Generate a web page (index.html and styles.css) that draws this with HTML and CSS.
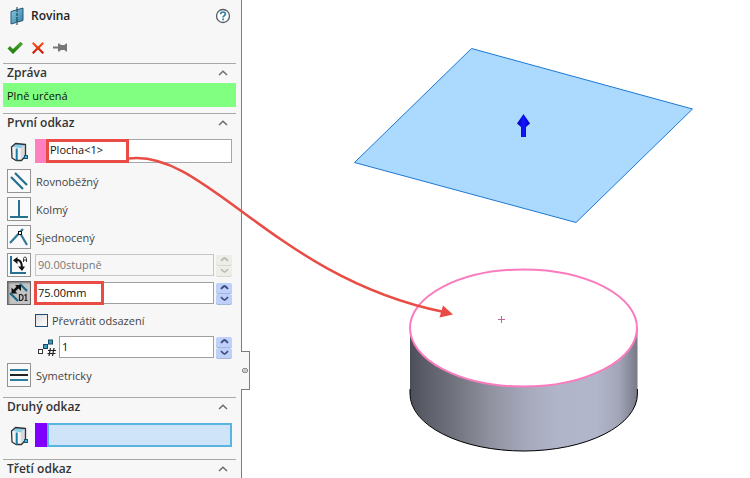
FILE: index.html
```html
<!DOCTYPE html>
<html lang="cs">
<head>
<meta charset="utf-8">
<title>Rovina</title>
<link rel="stylesheet" href="styles.css">
</head>
<body>
<svg class="defs" aria-hidden="true">
  <defs>
    <linearGradient id="blue" x1="0" y1="0" x2="1" y2="1"><stop offset="0" stop-color="#8fc8e0"/><stop offset="1" stop-color="#2f7fa5"/></linearGradient>
    <linearGradient id="green" x1="0" y1="0" x2="0" y2="1"><stop offset="0" stop-color="#4aa82c"/><stop offset="1" stop-color="#1d7c0d"/></linearGradient>
    <linearGradient id="red" x1="0" y1="0" x2="0" y2="1"><stop offset="0" stop-color="#ff5a1e"/><stop offset="1" stop-color="#c51208"/></linearGradient>
    <symbol id="chevron" viewBox="0 0 10 6"><path d="M1 5 5 1.200 9 5" fill="none" stroke="#6c6c6c" stroke-width="1.500"/></symbol>
    <symbol id="spin-up" viewBox="0 0 9 5"><path d="M1 4Q3.800 1 4.500 1T8 4" fill="none" stroke="currentColor" stroke-width="1.800"/></symbol>
    <symbol id="spin-down" viewBox="0 0 9 5"><path d="M1 1Q3.800 4 4.500 4T8 1" fill="none" stroke="currentColor" stroke-width="1.800"/></symbol>
    <symbol id="cube" viewBox="0 0 20 20">
      <path d="M1.500 5 5.500 1.500l10 1L11 6.500z" fill="#8bd0e8"/>
      <path d="m10.500 6.500 5-4V14l-5 4.500z" fill="#dadada"/>
      <path d="m1.500 5 9 1.500v12l-8-2z" fill="#f4f4f4"/>
      <path d="M1.500 5 5.500 1.500l10 1V14l-4 4.500H6l-4-2.500z" fill="none" stroke="#333" stroke-width="1.300" stroke-linejoin="round"/>
      <path d="M6.700 6.500v12" stroke="#187ba8" stroke-width="2"/>
      <rect x="14.500" y="13.500" width="3" height="3" fill="#4cb2d7" stroke="#135a7d"/>
    </symbol>
  </defs>
</svg>

<div class="app">
  <aside class="panel">
    <header class="title">
      <svg class="title-icon" viewBox="0 0 14 18" aria-hidden="true">
        <path d="M1 4.500 13 1v12.500L1 17z" fill="url(#blue)" stroke="#245b78"/>
        <path d="M7 0v18" stroke="#173443" stroke-dasharray="5 1 3 1"/>
      </svg>
      <h1>Rovina</h1>
      <button class="help" type="button" aria-label="Nápověda">
        <svg viewBox="0 0 16 16"><circle cx="8" cy="8" r="6.500" fill="#fff" stroke="#555b60" stroke-width="1.300"/><path d="M5.700 6.200C5.700 3.300 10.400 3.300 10.400 6c0 1.700-2.300 1.700-2.300 3.600M8.100 10.500v1.700" fill="none" stroke="#2b7fa8" stroke-width="1.700"/></svg>
      </button>
    </header>
    <div class="actions">
      <button type="button" aria-label="OK"><svg viewBox="0 0 16 14"><path d="M.500 7.500 3 5l3 3L13.500.700 16 3 6 13z" fill="url(#green)"/></svg></button>
      <button type="button" aria-label="Storno"><svg viewBox="0 0 16 14"><path d="m3.500 1 4.500 4.500L12.500 1 14 2.500 9.700 7l4.300 4.500-1.500 1.500L8 8.500 3.500 13 2 11.500 6.300 7 2 2.500z" fill="url(#red)"/></svg></button>
      <button type="button" aria-label="Připnout"><svg viewBox="0 0 16 14"><path d="M0 5.500h5V2.500h1.300L8 4h3.500l1.500-1.500h1v8h-1L11.500 9H8l-1.700 1.500H5v-3H0z" fill="#777"/></svg></button>
    </div>

    <section class="section">
      <button class="section-head" type="button">Zpráva<svg><use href="#chevron"/></svg></button>
      <p class="message">Plně určená</p>
    </section>

    <section class="section">
      <button class="section-head" type="button">První odkaz<svg><use href="#chevron"/></svg></button>
      <div class="rows">
        <div class="row pick-row">
          <label class="pick-icon" for="ref1" aria-label="První odkaz"><svg viewBox="0 0 20 20"><use href="#cube"/></svg></label>
          <div class="pick pink"><input id="ref1" type="text" value="Plocha&lt;1&gt;" readonly></div>
        </div>
        <div class="row">
          <button class="tool" id="parallel" type="button"><svg viewBox="0 0 22 22"><path d="m3 7 12 12M7 3l12 12" stroke="#26718f" stroke-width="2.200"/></svg></button>
          <label for="parallel">Rovnoběžný</label>
        </div>
        <div class="row">
          <button class="tool" id="perp" type="button"><svg viewBox="0 0 22 22"><path d="M11 2v16M2 19h18" stroke="#26718f" stroke-width="2"/></svg></button>
          <label for="perp">Kolmý</label>
        </div>
        <div class="row">
          <button class="tool" id="coincident" type="button"><svg viewBox="0 0 22 22"><path d="M2 17 15 3M12 7l7 12" stroke="#2e7897" stroke-width="2.200"/><rect x="10.500" y="5.500" width="3" height="3" fill="#fff" stroke="#111"/></svg></button>
          <label for="coincident">Sjednocený</label>
        </div>
        <div class="row">
          <button class="tool" type="button" aria-label="Úhel"><svg viewBox="0 0 22 22"><path d="M3 2v17h15" fill="none" stroke="#26718f" stroke-width="2"/><path d="M7 6h3q4 1 4 8" fill="none" stroke="#111" stroke-width="2"/><path d="M5 6.200 9.500 3v7zM10 12.500h7L14 17z" fill="#111"/><path d="M15.500 8V4.500l1-1.500h1l1 1.500V8M15.500 6h3" fill="none" stroke="#333"/></svg></button>
          <input class="value" type="text" value="90.00stupně" aria-label="Úhel ve stupních" disabled>
          <span class="spin"><button type="button" aria-label="Zvětšit úhel" disabled><svg><use href="#spin-up"/></svg></button><button type="button" aria-label="Zmenšit úhel" disabled><svg><use href="#spin-down"/></svg></button></span>
        </div>
        <div class="row">
          <button class="tool pressed" type="button" aria-label="Vzdálenost" aria-pressed="true"><svg viewBox="0 0 22 22"><path d="m2 11 8 8M12 2l7 7" stroke="#176889" stroke-width="2.200"/><path d="m5 10 6-6" stroke="#111" stroke-width="2.500"/><path d="M3.500 11.500V5.500l6 6zM7 3h6v6z" fill="#111"/><path d="M11.500 12.500v6h2l1.500-1.500v-3l-1.500-1.500zM16.500 13.500l1.500-1v6M16.500 18.500h3" fill="none" stroke="#222" stroke-width="1.200"/></svg></button>
          <input class="value" type="text" value="75.00mm" aria-label="Vzdálenost odsazení">
          <span class="spin"><button type="button" aria-label="Zvětšit vzdálenost"><svg><use href="#spin-up"/></svg></button><button type="button" aria-label="Zmenšit vzdálenost"><svg><use href="#spin-down"/></svg></button></span>
        </div>
        <div class="row check-row">
          <input class="check" type="checkbox" id="flip"><label for="flip">Převrátit odsazení</label>
        </div>
        <div class="row count-row">
          <label class="count-icon" for="count" aria-label="Počet rovin"><svg viewBox="0 0 20 18"><rect x="1.500" y="10.500" width="4" height="4" fill="#fff" stroke="#333"/><rect x="6.500" y="5.500" width="4" height="4" fill="#3d9bc1" stroke="#174a63"/><rect x="11.500" y="1" width="4" height="4" fill="#3d9bc1" stroke="#174a63"/><path d="m13.500 9-1.500 8M17 9l-1.500 8M11 11.500h8M10.500 14.500h8" stroke="#222" stroke-width="1.200"/></svg></label>
          <input class="value" id="count" type="text" value="1">
          <span class="spin"><button type="button" aria-label="Zvětšit počet"><svg><use href="#spin-up"/></svg></button><button type="button" aria-label="Zmenšit počet"><svg><use href="#spin-down"/></svg></button></span>
        </div>
        <div class="row">
          <button class="tool" id="mid" type="button"><svg viewBox="0 0 22 22"><path d="M2 6h18M2 16h18" stroke="#2f7c9e" stroke-width="2"/><path d="M2 11h18" stroke="#222" stroke-width="2"/></svg></button>
          <label for="mid">Symetricky</label>
        </div>
      </div>
    </section>

    <section class="section">
      <button class="section-head" type="button">Druhý odkaz<svg><use href="#chevron"/></svg></button>
      <div class="rows">
        <div class="row pick-row">
          <label class="pick-icon" for="ref2" aria-label="Druhý odkaz"><svg viewBox="0 0 20 20"><use href="#cube"/></svg></label>
          <div class="pick violet"><input id="ref2" type="text" readonly></div>
        </div>
      </div>
    </section>

    <section class="section">
      <button class="section-head" type="button">Třetí odkaz<svg><use href="#chevron"/></svg></button>
    </section>
    <button class="handle" type="button" aria-label="Skrýt panel"></button>
  </aside>

  <main class="viewport">
    <svg class="scene" viewBox="242 0 508 478" preserveAspectRatio="xMinYMin meet" role="img" aria-label="Válec a rovnoběžná rovina">
      <defs>
        <linearGradient id="side"><stop offset="0" stop-color="#4c4e59"/><stop offset=".06" stop-color="#5a5c68"/><stop offset=".2" stop-color="#72747f"/><stop offset=".35" stop-color="#8f919f"/><stop offset=".52" stop-color="#a7aabd"/><stop offset=".65" stop-color="#b1b5ca"/><stop offset=".82" stop-color="#b2b6cb"/><stop offset=".92" stop-color="#a2a5b7"/><stop offset="1" stop-color="#777986"/></linearGradient>
        <linearGradient id="tip"><stop offset="0" stop-color="#0000ae"/><stop offset=".5" stop-color="#1414ff"/><stop offset="1" stop-color="#0000c4"/></linearGradient>
      </defs>
      <path d="M471.500 48.500 692.500 109 576 222.500 354.500 162.500z" fill="#acdaff" stroke="#1c78d4"/>
      <path d="M523.500 114 530 123.500 526 127v10h-5v-10l-4-3.500z" fill="url(#tip)"/>
      <path d="M410 328v65.500a113.500 57.500 0 0 0 227.500 0V328z" fill="url(#side)"/>
      <path d="M410 389v5a113.700 57 0 0 0 227.400 0v-5" fill="none" stroke="#000"/>
      <ellipse cx="523.500" cy="328" rx="113.500" ry="58.500" fill="#fff" stroke="#fa7cbe" stroke-width="2"/>
      <path d="M498 319.500h7M501.500 316v7" stroke="#c4689c"/>
    </svg>
  </main>

  <svg class="callouts" viewBox="0 0 750 478" aria-hidden="true">
    <g fill="none" stroke="#e84c44" stroke-width="3">
      <rect x="47.500" y="140.500" width="80" height="21"/>
      <rect x="35.500" y="282.500" width="67" height="21"/>
      <path d="M129 158.500C205 149 276 278 444 312" stroke-width="2.500"/>
    </g>
    <path d="m443 305.500 10 9-13.500 3z" fill="#e84c44"/>
  </svg>
</div>
</body>
</html>
```

FILE: styles.css
```css
* { box-sizing: border-box; }

body {
  margin: 0;
  background: #fff;
  color: #444;
  font: 11px/16px "Open Sans", "Noto Sans", sans-serif;
}

button, input { font: inherit; color: inherit; }
button { padding: 0; border: 0; background: none; }
svg { display: block; }
.defs { position: absolute; width: 0; height: 0; }

.app {
  position: relative;
  display: flex;
  min-height: 100vh;
  overflow: hidden;
}

.panel {
  position: relative;
  flex: none;
  width: 242px;
  padding: 0 5px 0 3px;
  border-right: 1px solid #7c7c7c;
  background: #f7f7f7;
}

.title {
  display: flex;
  align-items: center;
  gap: 7px;
  height: 32px;
  padding: 0 5px 0 7px;
}
.title-icon { width: 14px; height: 18px; }
.title h1 { flex: 1; margin: 0; color: #222; }
.help svg { width: 16px; height: 16px; }

.title h1, .section-head { font-size: 12px; font-weight: 600; }

.actions {
  display: flex;
  align-items: center;
  gap: 7px;
  height: 31px;
  padding-left: 4px;
}
.actions svg { width: 16px; height: 14px; }

.section { border-top: 1px solid #a9a9a9; padding-bottom: 6px; }
.section-head {
  display: flex;
  align-items: center;
  justify-content: space-between;
  width: 100%;
  height: 19px;
  padding: 0 8px 2px 4px;
  color: #333;
}
.section-head svg { width: 10px; height: 6px; }

.message {
  margin: 0;
  padding: 5px 4px 3px;
  background: #80ff80;
  color: #111;
}

.rows {
  display: flex;
  flex-direction: column;
  gap: 4px;
  padding: 6px 4px 4px;
}
.row { display: flex; align-items: center; height: 24px; }
.row label { padding-top: 2px; }
.pick-row { margin-bottom: 2px; }

.tool {
  flex: none;
  width: 24px;
  height: 24px;
  margin-right: 4px;
  border: 1px solid #939393;
  background: #fafafa;
}
.tool + label { margin-left: 1px; }
.tool.pressed { background: #c4c4c4; border-color: #666; box-shadow: inset 1px 1px 2px #777; }
.tool svg { width: 22px; height: 22px; }

.pick-icon { flex: none; width: 28px; padding-left: 3px; }
.pick-icon svg { width: 20px; height: 20px; }
.pick { flex: 1; min-width: 0; display: flex; height: 24px; border-left: 12px solid; }
.pick input {
  flex: 1;
  min-width: 0;
  padding: 0 2px 2px;
  border: 1px solid #a3a7ab;
  border-radius: 0;
  background: #fff;
  color: #111;
}
.pink { border-color: #ff80c0; }
.violet { border-color: #8000ff; }
.violet input { border: 2px solid #5ab4e0; background: #cfe4f8; }

.value {
  flex: 1;
  min-width: 0;
  height: 22px;
  padding: 0 2px 2px;
  border: 1px solid #a0a0a0;
  border-radius: 0;
  background: #fff;
  color: #111;
}
.value:disabled { border-color: #c6c6c6; background: #f7f7f7; color: #777; }

.spin { display: flex; flex-direction: column; gap: 1px; margin-left: 2px; }
.spin button {
  display: grid;
  place-items: center;
  width: 16px;
  height: 10px;
  border-radius: 2px;
  background: #bfd0fa;
  box-shadow: 0 1px #a5b5dc;
  color: #3c4f7c;
}
.spin button:disabled { background: #eeeee8; box-shadow: 0 1px #d8d8d0; color: #bdbdb5; }
.spin svg { width: 9px; height: 5px; }

.check-row { height: 22px; padding-left: 28px; gap: 4px; }
.check {
  appearance: none;
  width: 13px;
  height: 13px;
  margin: 0;
  border: 1px solid #1f4a7c;
  background: linear-gradient(135deg, #dcdcdc, #fff);
}
.count-row { padding-left: 30px; }
.count-icon svg { width: 20px; height: 18px; }
.count-icon { margin-right: 2px; }

.handle {
  position: absolute;
  left: 100%;
  top: 351px;
  width: 9px;
  height: 39px;
  border: 1px solid #7c7c7c;
  border-left: 0;
  background: radial-gradient(circle at 4px 50%, #ccc 0 2px, #909090 2px 3px, #f7f7f7 3px);
}

.viewport { flex: 1; min-width: 0; }
.scene { width: 100%; }

.callouts {
  position: absolute;
  left: 0;
  top: 0;
  width: 750px;
  height: 478px;
  pointer-events: none;
}
```
